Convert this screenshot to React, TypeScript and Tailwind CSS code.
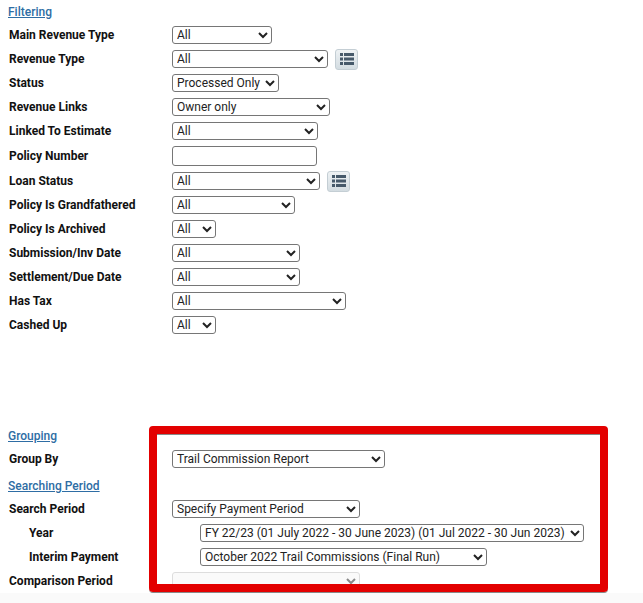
type RowProps = {
  label: string
  value?: string
  width: string
  height?: string
  indent?: boolean
  list?: boolean
  input?: boolean
  disabled?: boolean
}

function ListButton() {
  return (
    <button className="ml-[7px] flex h-[21px] w-[23px] items-center justify-center rounded-[3px] border border-[#c4ced4] bg-gradient-to-b from-[#eef2f4] to-[#d3dce1] text-[#46596a]">
      <svg width="14" height="12" viewBox="0 0 14 12" fill="currentColor">
        <rect x="0" y="0" width="3" height="3" />
        <rect x="4" y="0" width="10" height="3" />
        <rect x="0" y="4.5" width="3" height="3" />
        <rect x="4" y="4.5" width="10" height="3" />
        <rect x="0" y="9" width="3" height="3" />
        <rect x="4" y="9" width="10" height="3" />
      </svg>
    </button>
  )
}

function Row({ label, value = "All", width, height = "h-6", indent, list, input, disabled }: RowProps) {
  return (
    <div className={`flex items-center ${height}`}>
      <label className={`w-[172px] shrink-0 font-bold text-[#111] ${indent ? "pl-[29px]" : "pl-[9px]"}`}>{label}</label>
      <div className={`flex items-center ${indent ? "pl-[28px]" : ""}`}>
        {input ? (
          <input className={`h-5 rounded-[3px] border border-[#767676] bg-white ${width}`} />
        ) : (
          <select
            disabled={disabled}
            defaultValue={value}
            className={`h-[18px] rounded-[3px] border border-[#767676] bg-white text-[#222] disabled:border-[#ddd] disabled:bg-[#fafafa] disabled:text-[#888] disabled:opacity-100 ${width}`}
          >
            <option>{value}</option>
          </select>
        )}
        {list && <ListButton />}
      </div>
    </div>
  )
}

function Heading({ children, height }: { children: string; height: string }) {
  return (
    <div className={`flex items-center pl-2 ${height}`}>
      <a href="#" className="font-medium text-[#2e6da4] underline">
        {children}
      </a>
    </div>
  )
}

export default function App() {
  return (
    <div className="relative h-[603px] w-[643px] overflow-hidden bg-white font-['Roboto',sans-serif] text-[12px]">
      <Heading height="h-[23px]">Filtering</Heading>
      <Row label="Main Revenue Type" width="w-[100px]" />
      <Row label="Revenue Type" width="w-[156px]" list />
      <Row label="Status" value="Processed Only" width="w-[107px]" />
      <Row label="Revenue Links" value="Owner only" width="w-[158px]" />
      <Row label="Linked To Estimate" width="w-[146px]" />
      <Row label="Policy Number" width="w-[145px]" height="h-[26px]" input />
      <Row label="Loan Status" width="w-[148px]" list />
      <Row label="Policy Is Grandfathered" width="w-[123px]" />
      <Row label="Policy Is Archived" width="w-11" />
      <Row label="Submission/Inv Date" width="w-[128px]" />
      <Row label="Settlement/Due Date" width="w-[128px]" />
      <Row label="Has Tax" width="w-[174px]" />
      <Row label="Cashed Up" width="w-11" />

      <div className="mt-[87px]">
        <Heading height="h-[23px]">Grouping</Heading>
        <Row label="Group By" value="Trail Commission Report" width="w-[213px]" />
        <div className="mt-[3px]">
          <Heading height="h-[23px]">Searching Period</Heading>
        </div>
        <Row label="Search Period" value="Specify Payment Period" width="w-[188px]" />
        <Row
          label="Year"
          value="FY 22/23 (01 July 2022 - 30 June 2023) (01 Jul 2022 - 30 Jun 2023)"
          width="w-[384px]"
          indent
        />
        <Row label="Interim Payment" value="October 2022 Trail Commissions (Final Run)" width="w-[287px]" indent />
        <Row label="Comparison Period" value="" width="w-[188px]" disabled />
      </div>

      <div className="h-[10px] bg-[#fafafa]" />

      {/* red highlight drawn over the form */}
      <div className="absolute top-[426px] left-[149px] h-[166px] w-[459px] rounded-[4px] border-[8px] border-[#e30000] shadow-[inset_0_1px_0_#888,0_1px_0_#888]" />
    </div>
  )
}
